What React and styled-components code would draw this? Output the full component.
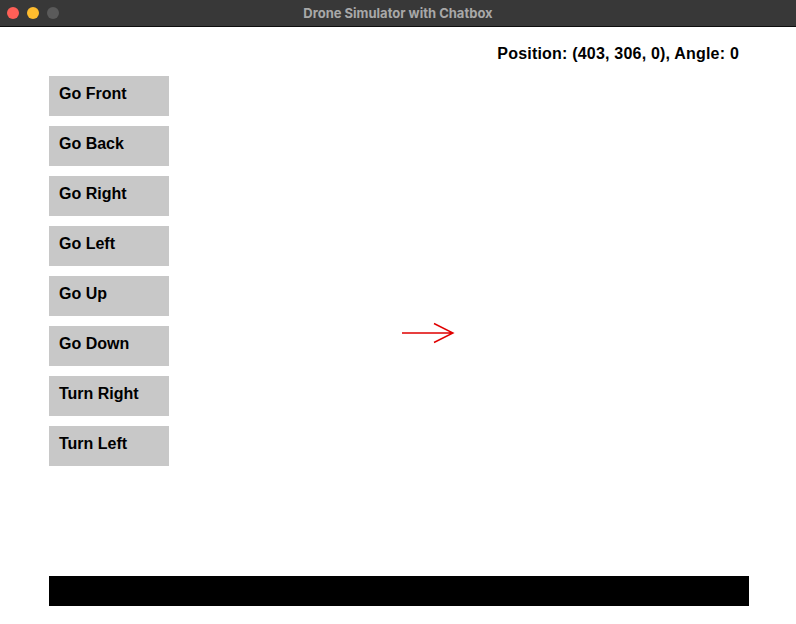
import React from "react";
import styled, { createGlobalStyle } from "styled-components";

const GlobalStyle = createGlobalStyle`
  html, body {
    margin: 0;
    padding: 0;
    background: #ffffff;
  }
  body {
    font-family: "Liberation Sans", Arial, sans-serif;
  }
`;

const Window = styled.div`
  width: 796px;
  height: 624px;
  display: flex;
  flex-direction: column;
  overflow: hidden;
`;

//Title bar
const TitleBar = styled.div`
  height: 26px;
  background: #383838;
  border-bottom: 1px solid #0e0e0e;
  display: flex;
  align-items: center;
  position: relative;
  flex-shrink: 0;
`;

const Lights = styled.div`
  display: flex;
  gap: 8px;
  padding-left: 7px;
`;

const Light = styled.span`
  width: 12px;
  height: 12px;
  border-radius: 50%;
  background: ${(props) => props.color};
`;

const Title = styled.div`
  position: absolute;
  left: 0;
  right: 0;
  text-align: center;
  color: #a8a8a8;
  font-family: "Inter", "Liberation Sans", sans-serif;
  font-size: 13px;
  font-weight: 700;
  pointer-events: none;
`;

//Canvas
const Stage = styled.div`
  position: relative;
  flex: 1;
  display: flex;
  flex-direction: column;
  padding: 0 47px 18px 49px;
  background: #ffffff;
`;

const Status = styled.div`
  margin-top: 18px;
  margin-right: 10px;
  text-align: right;
  font-size: 16px;
  font-weight: 700;
  letter-spacing: 0.2px;
  color: #000000;
`;

const Controls = styled.div`
  margin-top: 13px;
  display: flex;
  flex-direction: column;
  gap: 10px;
`;

const ControlButton = styled.div`
  width: 120px;
  height: 40px;
  box-sizing: border-box;
  padding: 9px 10px;
  background: #c8c8c8;
  color: #000000;
  font-size: 16px;
  font-weight: 700;
  cursor: pointer;
`;

const ChatBar = styled.div`
  margin-top: auto;
  width: 700px;
  height: 30px;
  background: #000000;
`;

const Drone = styled.svg`
  position: absolute;
  left: ${(props) => props.x - 2}px;
  top: ${(props) => props.y - 11}px;
`;

const commands = [
  "Go Front",
  "Go Back",
  "Go Right",
  "Go Left",
  "Go Up",
  "Go Down",
  "Turn Right",
  "Turn Left",
];

const App = () => {
  const pos = { x: 403, y: 306, z: 0 };
  const angle = 0;

  return (
    <>
      <GlobalStyle />
      <Window>
        <TitleBar>
          <Lights>
            <Light color="#fe5f57" />
            <Light color="#febc2e" />
            <Light color="#5a5a5a" />
          </Lights>
          <Title>Drone Simulator with Chatbox</Title>
        </TitleBar>
        <Stage>
          <Status>
            Position: ({pos.x}, {pos.y}, {pos.z}), Angle: {angle}
          </Status>
          <Controls>
            {commands.map((c, i) => (
              <ControlButton key={i}>{c}</ControlButton>
            ))}
          </Controls>
          <ChatBar />
          <Drone x={pos.x} y={pos.y} width="56" height="22" viewBox="0 0 56 22">
            <path
              d="M1 11 H52 M33 1.5 L52 11 L33 20.5"
              stroke="#e00000"
              strokeWidth="1.4"
              fill="none"
            />
          </Drone>
        </Stage>
      </Window>
    </>
  );
};

export default App;
